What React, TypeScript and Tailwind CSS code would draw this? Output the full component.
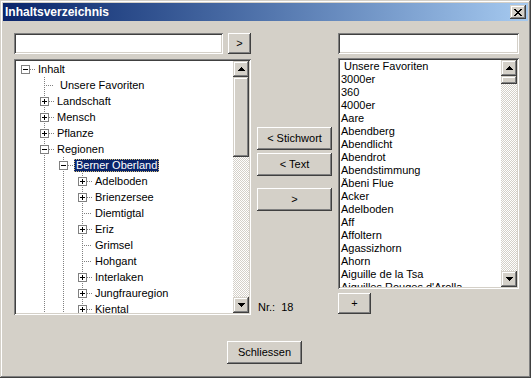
import React from "react";

const raised = "shadow-[inset_-1px_-1px_#404040,inset_1px_1px_#ffffff,inset_-2px_-2px_#808080]";
const raisedBar =
  "shadow-[inset_-1px_-1px_#404040,inset_1px_1px_#d4d0c8,inset_-2px_-2px_#808080,inset_2px_2px_#ffffff]";
const sunken =
  "shadow-[inset_1px_1px_#808080,inset_-1px_-1px_#ffffff,inset_2px_2px_#404040,inset_-2px_-2px_#d4d0c8]";

type Node = { l: number; t: string; box?: "+" | "-"; sel?: boolean };

const tree: Node[] = [
  { l: 0, t: "Inhalt", box: "-" },
  { l: 1, t: " Unsere Favoriten" },
  { l: 1, t: "Landschaft", box: "+" },
  { l: 1, t: "Mensch", box: "+" },
  { l: 1, t: "Pflanze", box: "+" },
  { l: 1, t: "Regionen", box: "-" },
  { l: 2, t: "Berner Oberland", box: "-", sel: true },
  { l: 3, t: "Adelboden", box: "+" },
  { l: 3, t: "Brienzersee", box: "+" },
  { l: 3, t: "Diemtigtal" },
  { l: 3, t: "Eriz", box: "+" },
  { l: 3, t: "Grimsel" },
  { l: 3, t: "Hohgant" },
  { l: 3, t: "Interlaken", box: "+" },
  { l: 3, t: "Jungfrauregion", box: "+" },
  { l: 3, t: "Kiental", box: "+" },
];

const words = [
  " Unsere Favoriten",
  "3000er",
  "360",
  "4000er",
  "Aare",
  "Abendberg",
  "Abendlicht",
  "Abendrot",
  "Abendstimmung",
  "Äbeni Flue",
  "Acker",
  "Adelboden",
  "Aff",
  "Affoltern",
  "Agassizhorn",
  "Ahorn",
  "Aiguille de la Tsa",
  "Aiguilles Rouges d'Arolla",
];

function Arrow({ down }: { down?: boolean }) {
  return (
    <svg width="7" height="4" viewBox="0 0 7 4" shapeRendering="crispEdges">
      <path
        fill="#000"
        d={
          down
            ? "M0 0h7v1h-1v1h-1v1h-1v1h-1v-1h-1v-1h-1v-1h-1z"
            : "M3 0h1v1h1v1h1v1h1v1h-7v-1h1v-1h1v-1h1z"
        }
      />
    </svg>
  );
}

function ScrollBar({ thumb }: { thumb: string }) {
  return (
    <div className="flex w-[16px] shrink-0 flex-col">
      <div className={`flex h-[16px] items-center justify-center bg-[#d4d0c8] ${raisedBar}`}>
        <Arrow />
      </div>
      <div className={`bg-[#d4d0c8] ${raisedBar} ${thumb}`} />
      <div className="flex-1 bg-[image:repeating-conic-gradient(#ffffff_0_25%,#d4d0c8_0_50%)] bg-size-[2px_2px]" />
      <div className={`flex h-[16px] items-center justify-center bg-[#d4d0c8] ${raisedBar}`}>
        <Arrow down />
      </div>
    </div>
  );
}

function TreeRow({ node }: { node: Node }) {
  const cx = 9 + 19 * node.l;
  const levels = Array.from({ length: node.l }, (_, i) => 9 + 19 * (i + 1));
  return (
    <div className="flex h-[16px] items-center">
      <svg width={cx + 11} height="16" className="shrink-0" shapeRendering="crispEdges">
        {levels.map((x) => (
          <line key={x} x1={x + 0.5} x2={x + 0.5} y1="0" y2="16" stroke="#808080" strokeDasharray="1 1" />
        ))}
        <line
          x1={node.box ? cx + 5 : cx}
          x2={cx + 10}
          y1="8.5"
          y2="8.5"
          stroke="#808080"
          strokeDasharray="1 1"
        />
        {node.box && (
          <g>
            <rect x={cx - 3.5} y="4.5" width="8" height="8" fill="#fff" stroke="#808080" />
            <rect x={cx - 2} y="8" width="5" height="1" fill="#000" />
            {node.box === "+" && <rect x={cx} y="6" width="1" height="5" fill="#000" />}
          </g>
        )}
      </svg>
      <span
        className={`mt-[1px] h-[13px] whitespace-pre px-[2px] leading-[13px] ${
          node.sel ? "bg-[#0a246a] text-white outline-1 -outline-offset-1 outline-dotted outline-[#d8c27a]" : "text-black"
        }`}
      >
        {node.t}
      </span>
    </div>
  );
}

function Btn({ className, children }: { className: string; children: React.ReactNode }) {
  return (
    <div className={`flex items-center justify-center bg-[#d4d0c8] text-[11px] text-black ${raised} ${className}`}>
      {children}
    </div>
  );
}

export default function App() {
  return (
    <div
      className={`h-[378px] w-[531px] overflow-hidden bg-[#d4d0c8] p-[3px] font-['Liberation_Sans',Arial,sans-serif] text-[11px] ${raisedBar}`}
    >
      {/* title bar */}
      <div className="flex h-[18px] items-center justify-between bg-linear-to-r from-[#0a246a] to-[#a6caf0] pl-[2px] pr-[2px]">
        <span className="text-[12px] font-bold leading-[18px] text-white">Inhaltsverzeichnis</span>
        <div className={`flex h-[14px] w-[16px] items-center justify-center bg-[#d4d0c8] ${raisedBar}`}>
          <svg width="8" height="7" viewBox="0 0 8 7" shapeRendering="crispEdges">
            <path
              fill="#000"
              d="M0 0h2v1h1v1h2v-1h1v-1h2v1h-1v1h-1v1h-1v1h1v1h1v1h1v1h-2v-1h-1v-1h-2v1h-1v1h-2v-1h1v-1h1v-1h1v-1h-1v-1h-1v-1h-1z"
            />
          </svg>
        </div>
      </div>

      <div className="ml-[11px] mt-[12px] flex h-[282px] items-start">
        {/* left column */}
        <div className="flex w-[237px] flex-col">
          <div className="flex gap-[5px]">
            <div className={`h-[21px] w-[209px] bg-white ${sunken}`} />
            <Btn className="h-[21px] w-[23px]">&gt;</Btn>
          </div>
          <div className={`mt-[5px] flex h-[256px] bg-white p-[2px] ${sunken}`}>
            <div className="flex-1 overflow-hidden">
              {tree.map((n) => (
                <TreeRow key={n.t} node={n} />
              ))}
            </div>
            <ScrollBar thumb="h-[80px]" />
          </div>
        </div>

        {/* middle column */}
        <div className="ml-[6px] flex w-[75px] flex-col">
          <Btn className="mt-[94px] h-[23px]">&lt; Stichwort</Btn>
          <Btn className="mt-[3px] h-[23px]">&lt; Text</Btn>
          <Btn className="mt-[12px] h-[23px]">&gt;</Btn>
          <div className="mt-[90px] whitespace-pre pl-[1px] leading-[13px] text-black">Nr.:  18</div>
        </div>

        {/* right column */}
        <div className="ml-[6px] flex w-[181px] flex-col">
          <div className={`h-[21px] bg-white ${sunken}`} />
          <div className={`mt-[4px] flex h-[231px] bg-white p-[2px] ${sunken}`}>
            <div className="flex-1 overflow-hidden">
              {words.map((w) => (
                <div key={w} className="h-[13px] whitespace-pre pl-[1px] leading-[13px] text-black">
                  {w}
                </div>
              ))}
            </div>
            <ScrollBar thumb="h-[8px]" />
          </div>
          <Btn className="mt-[4px] h-[21px] w-[33px]">+</Btn>
        </div>
      </div>

      <Btn className="ml-[224px] mt-[26px] h-[23px] w-[75px]">Schliessen</Btn>
    </div>
  );
}
